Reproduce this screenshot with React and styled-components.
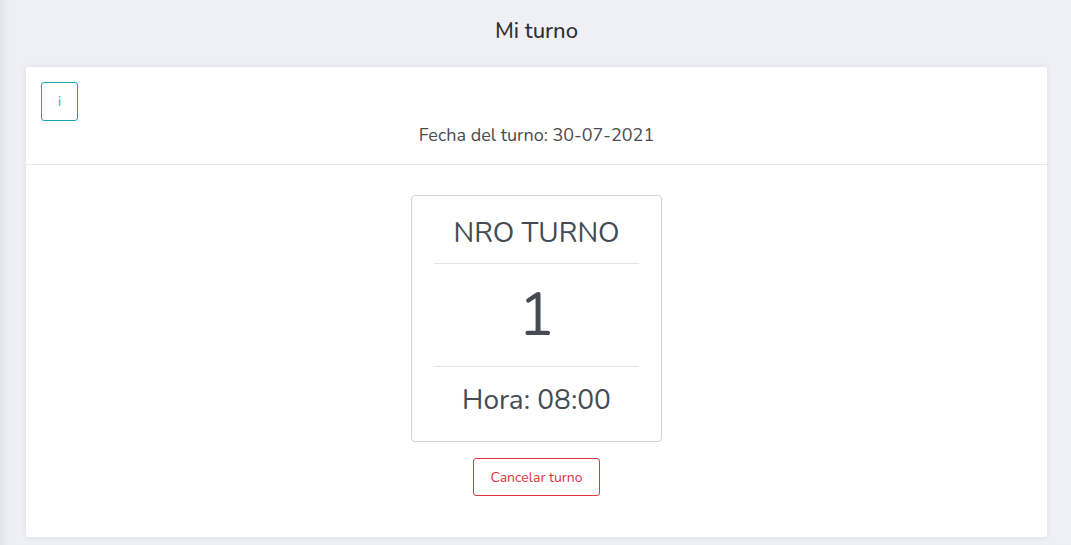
import React from 'react';
import styled, { createGlobalStyle } from 'styled-components';

const GlobalStyle = createGlobalStyle`
  html, body {
    margin: 0;
    padding: 0;
    background: #eff0f5;
    font-family: "Nunito", "Lato", "Open Sans", sans-serif;
  }
`;

const Page = styled.div`
  min-height: 545px;
  padding: 0 24px 8px 26px;
  box-sizing: border-box;
  background: #eff0f5;
  box-shadow: inset 9px 0 8px -6px rgba(0, 0, 20, 0.07);
`;

const Title = styled.h1`
  margin: 0;
  height: 67px;
  display: flex;
  align-items: center;
  justify-content: center;
  padding-bottom: 6px;
  box-sizing: border-box;
  font-size: 22px;
  font-weight: 500;
  color: #2f2f33;
`;

const Card = styled.div`
  background: #fff;
  border-radius: 2px;
  box-shadow: 0 0 6px rgba(30, 30, 60, 0.08);
`;

const CardHeader = styled.div`
  padding: 15px 15px 17px;
  border-bottom: 1px solid #e8e8ee;
`;

const OutlineButton = styled.button`
  font-family: inherit;
  background: #fff;
  border: 1px solid ${(p) => p.$color};
  color: ${(p) => p.$color};
  border-radius: 3px;
  font-size: ${(p) => p.$size || 14}px;
  width: ${(p) => p.$width}px;
  height: ${(p) => p.$height}px;
  padding: 0;
  cursor: pointer;
  display: block;
`;

const DateLine = styled.div`
  text-align: center;
  font-size: 18px;
  line-height: 24px;
  color: #4a4a4f;
  margin-top: 2px;
`;

const CardBody = styled.div`
  padding: 30px 15px 41px;
  display: flex;
  flex-direction: column;
  align-items: center;
  gap: 16px;
`;

const TurnBox = styled.div`
  width: 251px;
  box-sizing: border-box;
  border: 1px solid #cfd2d6;
  border-radius: 4px;
  padding: 0 22px;
  color: #454b53;
  text-align: center;
`;

const Section = styled.div`
  box-sizing: border-box;
  height: ${(p) => p.$h + (p.$last ? 0 : 1)}px;
  padding: ${(p) => p.$pt || 0}px 0 ${(p) => p.$pb || 0}px;
  display: flex;
  align-items: center;
  justify-content: center;
  font-size: ${(p) => p.$size}px;
  border-bottom: ${(p) => (p.$last ? 'none' : '1px solid #e2e4e8')};
`;

export default function App() {
  return (
    <>
      <GlobalStyle />
      <Page>
        <Title>Mi turno</Title>
        <Card>
          <CardHeader>
            <OutlineButton $color="#17a2b8" $width={37} $height={39} $size={13}>i</OutlineButton>
            <DateLine>Fecha del turno: 30-07-2021</DateLine>
          </CardHeader>
          <CardBody>
            <TurnBox>
              <Section $h={67} $size={28} $pt={6}>NRO TURNO</Section>
              <Section $h={102} $size={60}>1</Section>
              <Section $h={74} $size={28} $pb={9} $last>Hora: 08:00</Section>
            </TurnBox>
            <OutlineButton $color="#dc3545" $width={127} $height={38}>Cancelar turno</OutlineButton>
          </CardBody>
        </Card>
      </Page>
    </>
  );
}
